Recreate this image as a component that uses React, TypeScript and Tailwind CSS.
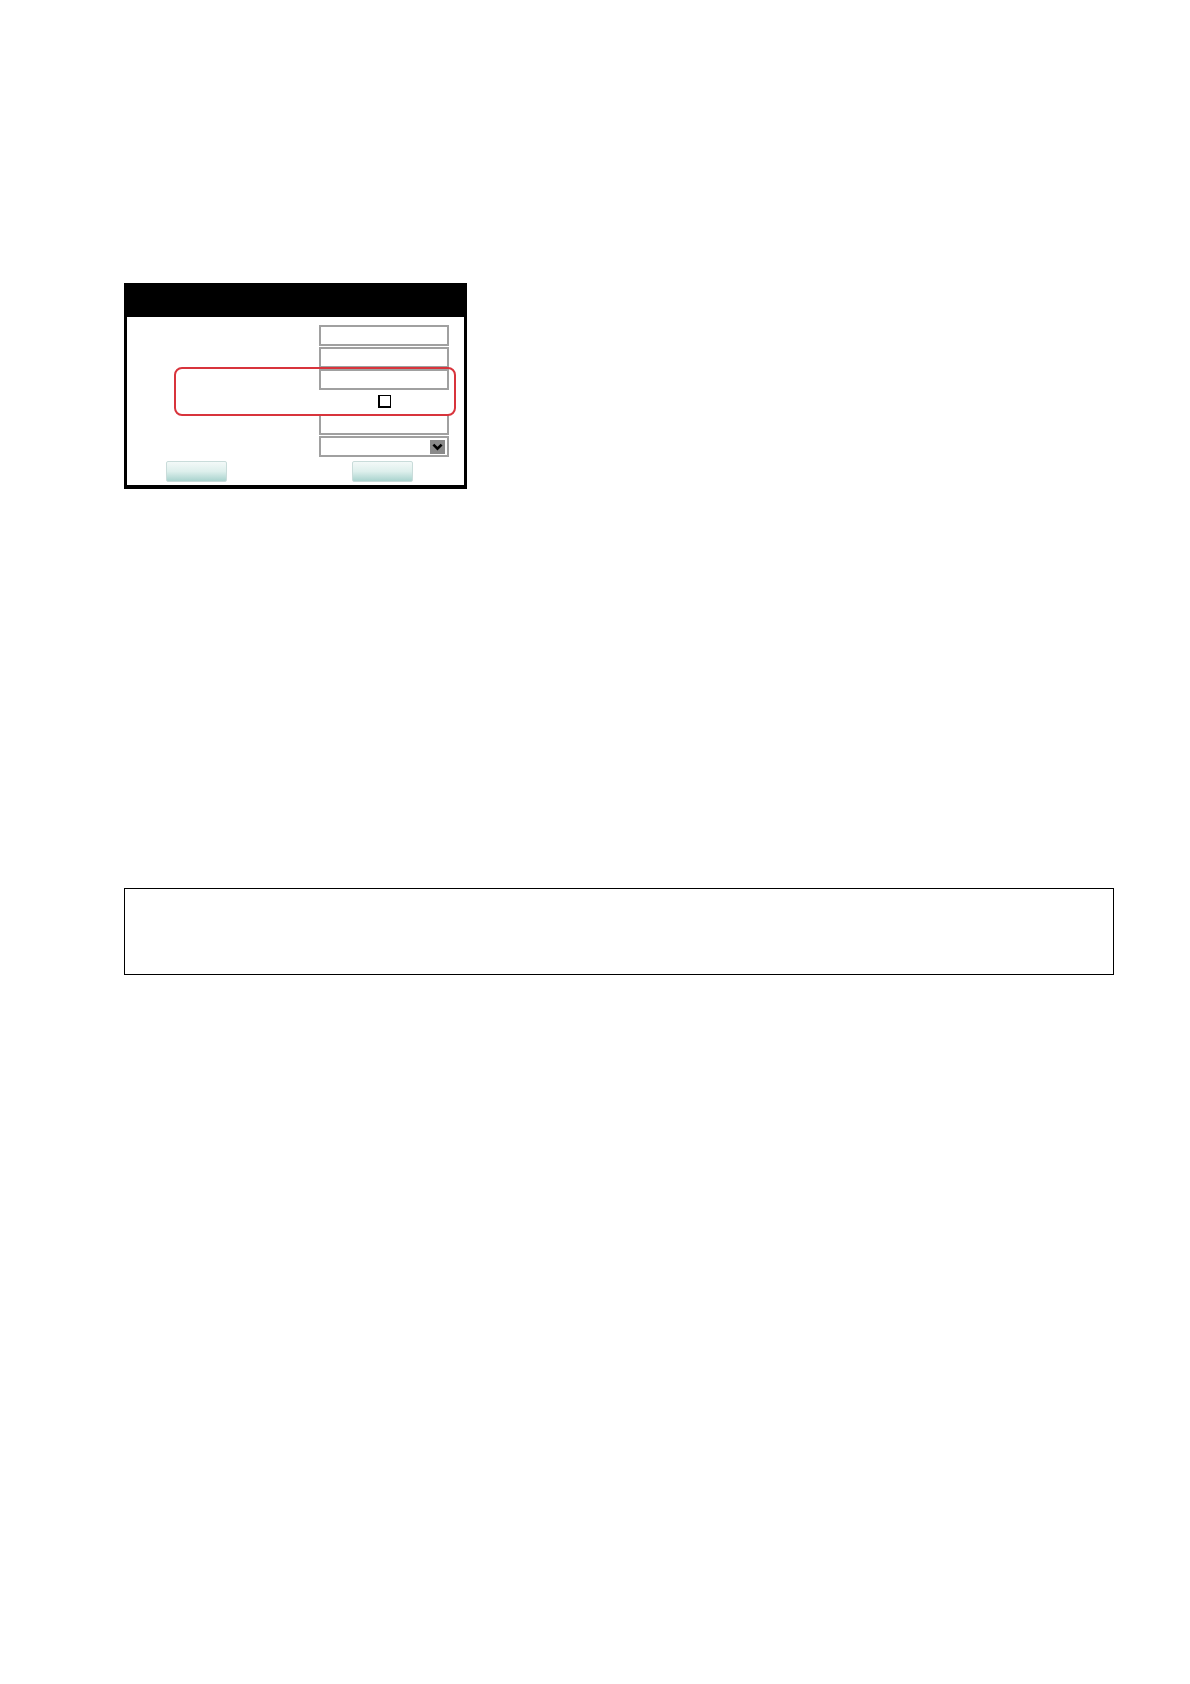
export default function App() {
  return (
    <div className="min-h-[1684px] w-[1190px] bg-white pl-[124px] pt-[283px] font-['Liberation_Sans',sans-serif]">
      <div className="relative w-[343px] border-x-[3px] border-b-[4px] border-black">
        <div className="h-[34px] bg-black" />
        <div className="flex flex-col pt-[8px] pb-[3px]">
          <div className="ml-[192px] flex w-[130px] flex-col">
            <div className="h-[21px] border-2 border-[#a0a0a0]" />
            <div className="mt-[1px] h-[21px] border-2 border-[#a0a0a0]" />
            <div className="mt-[1px] h-[21px] border-2 border-[#a0a0a0]" />
            <div className="flex h-[24px] justify-center pt-[5px]">
              <div className="h-[13px] w-[13px] border border-l-2 border-b-2 border-black bg-white" />
            </div>
            <div className="h-[21px] border-2 border-[#a0a0a0]" />
            <div className="mt-[1px] flex h-[21px] items-center justify-end border-2 border-[#a0a0a0] pr-[2px]">
              <div className="flex h-[14px] w-[15px] items-center justify-center bg-[#8a8a8a]">
                <svg width="11" height="8" viewBox="0 0 11 8">
                  <path d="M1.4 1.6 L5.5 5.6 L9.6 1.6" fill="none" stroke="#000" strokeWidth="2.6" />
                </svg>
              </div>
            </div>
          </div>
          <div className="mt-[4px] flex">
            <button className="ml-[39px] h-[21px] w-[61px] rounded-[2px] border border-[#c9dcda] bg-gradient-to-b from-[#f3f9f8] via-[#ddefec] to-[#a9d3ce]" />
            <button className="ml-[125px] h-[21px] w-[61px] rounded-[2px] border border-[#c9dcda] bg-gradient-to-b from-[#f3f9f8] via-[#ddefec] to-[#a9d3ce]" />
          </div>
        </div>
        <div className="pointer-events-none absolute left-[47px] top-[84px] h-[49px] w-[282px] rounded-[8px] border-2 border-[#d8343c]" />
      </div>
      <div className="mt-[399px] h-[87px] w-[990px] border border-black" />
    </div>
  );
}
